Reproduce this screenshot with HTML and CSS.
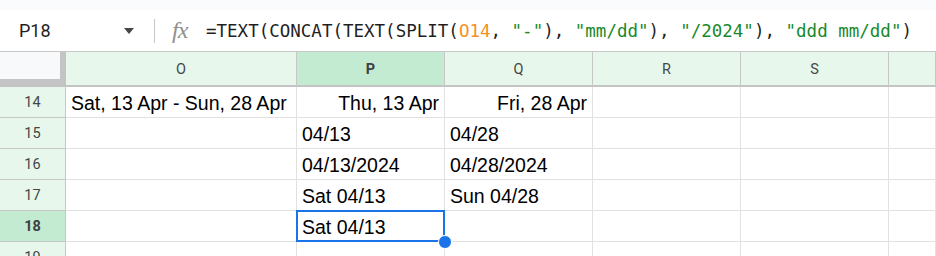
FILE: index.html
```html
<!DOCTYPE html>
<html lang="en">
<head>
    <meta charset="UTF-8">
    <meta name="viewport" content="width=device-width, initial-scale=1.0">
    <title>Sheet - P18</title>
    <link rel="stylesheet" href="styles.css">
</head>
<body>
    <div class="top-strip"></div>
    <div class="formula-bar">
        <div class="name-box">
            <span>P18</span>
            <svg class="caret" width="10" height="6" viewBox="0 0 10 6"><path d="M0 0 L10 0 L5 6 Z" fill="#444746"/></svg>
        </div>
        <div class="sep"></div>
        <span class="fx">fx</span>
        <div class="formula">=TEXT(CONCAT(TEXT(SPLIT(<span class="ref">O14</span>, <span class="str">"-"</span>), <span class="str">"mm/dd"</span>), <span class="str">"/2024"</span>), <span class="str">"ddd mm/dd"</span>)</div>
    </div>
    <div class="grid">
        <div class="corner"></div>
        <div class="col-head">O</div>
        <div class="col-head selected">P</div>
        <div class="col-head">Q</div>
        <div class="col-head">R</div>
        <div class="col-head">S</div>
        <div class="col-head"></div>

        <div class="row-head">14</div>
        <div class="cell">Sat, 13 Apr - Sun, 28 Apr</div>
        <div class="cell right">Thu, 13 Apr</div>
        <div class="cell right">Fri, 28 Apr</div>
        <div class="cell"></div>
        <div class="cell"></div>
        <div class="cell"></div>

        <div class="row-head">15</div>
        <div class="cell"></div>
        <div class="cell">04/13</div>
        <div class="cell">04/28</div>
        <div class="cell"></div>
        <div class="cell"></div>
        <div class="cell"></div>

        <div class="row-head">16</div>
        <div class="cell"></div>
        <div class="cell">04/13/2024</div>
        <div class="cell">04/28/2024</div>
        <div class="cell"></div>
        <div class="cell"></div>
        <div class="cell"></div>

        <div class="row-head">17</div>
        <div class="cell"></div>
        <div class="cell">Sat 04/13</div>
        <div class="cell">Sun 04/28</div>
        <div class="cell"></div>
        <div class="cell"></div>
        <div class="cell"></div>

        <div class="row-head selected">18</div>
        <div class="cell"></div>
        <div class="cell active">Sat 04/13<span class="handle"></span></div>
        <div class="cell"></div>
        <div class="cell"></div>
        <div class="cell"></div>
        <div class="cell"></div>

        <div class="row-head">19</div>
        <div class="cell"></div>
        <div class="cell"></div>
        <div class="cell"></div>
        <div class="cell"></div>
        <div class="cell"></div>
        <div class="cell"></div>
    </div>
</body>
</html>
```

FILE: styles.css
```css
* {
    box-sizing: border-box;
}
body {
    margin: 0;
    width: 936px;
    height: 256px;
    overflow: hidden;
    background: #fff;
    font-family: "Liberation Sans", Arial, sans-serif;
}
.top-strip {
    height: 10px;
    background: #f9fbfd;
}
.formula-bar {
    height: 42px;
    display: flex;
    align-items: center;
    border-bottom: 1px solid #c7c7c7;
}
.name-box {
    width: 154px;
    padding-left: 19px;
    padding-right: 20px;
    display: flex;
    align-items: center;
    justify-content: space-between;
    font-family: Roboto, sans-serif;
    font-size: 18px;
    color: #1f1f1f;
}
.caret {
    margin-top: 1px;
}
.sep {
    width: 1px;
    height: 24px;
    background: #c7c7c7;
}
.fx {
    margin-left: 17px;
    width: 34px;
    font-family: "Liberation Serif", serif;
    font-style: italic;
    font-size: 24px;
    color: #8f8f8f;
    letter-spacing: -1px;
}
.formula {
    font-family: "DejaVu Sans Mono", monospace;
    font-size: 17.5px;
    color: #1f1f1f;
    white-space: pre;
}
.ref {
    color: #f4911e;
}
.str {
    color: #188a2c;
}
.grid {
    display: grid;
    grid-template-columns: 66px 231px 148px 148px 148px 148px 1fr;
    grid-template-rows: 35px repeat(6, 31px);
}
.corner {
    background: #f8f9fa;
    border-right: 6px solid #c4c4c4;
    border-bottom: 8px solid #c4c4c4;
}
.col-head {
    background: #e7f7ec;
    border-right: 1px solid #c7c7c7;
    border-bottom: 2px solid #c4c4c4;
    display: flex;
    align-items: center;
    justify-content: center;
    font-family: Roboto, sans-serif;
    font-size: 14.5px;
    color: #444746;
    padding-top: 1px;
}
.col-head.selected {
    background: #c3ebd2;
    font-weight: bold;
    color: #3c4043;
}
.row-head {
    background: #e7f7ec;
    border-right: 1px solid #c7c7c7;
    border-bottom: 1px solid #c7c7c7;
    display: flex;
    align-items: center;
    justify-content: center;
    font-family: Roboto, sans-serif;
    font-size: 14.5px;
    color: #444746;
}
.row-head.selected {
    background: #c3ebd2;
    font-weight: bold;
    color: #3c4043;
}
.cell {
    position: relative;
    border-right: 1px solid #e1e1e1;
    border-bottom: 1px solid #e1e1e1;
    display: flex;
    align-items: flex-end;
    padding: 0 5px 3px 5px;
    font-size: 19.5px;
    line-height: 22px;
    color: #000;
    white-space: nowrap;
}
.cell.right {
    justify-content: flex-end;
}
.cell.active::after {
    content: '';
    position: absolute;
    left: -1px;
    top: -1px;
    right: -1px;
    bottom: -1px;
    border: 2px solid #1a73e8;
}
.handle {
    position: absolute;
    right: -8px;
    bottom: -8px;
    width: 14px;
    height: 14px;
    border-radius: 50%;
    background: #1a73e8;
    border: 1px solid #fff;
    z-index: 2;
}
```
